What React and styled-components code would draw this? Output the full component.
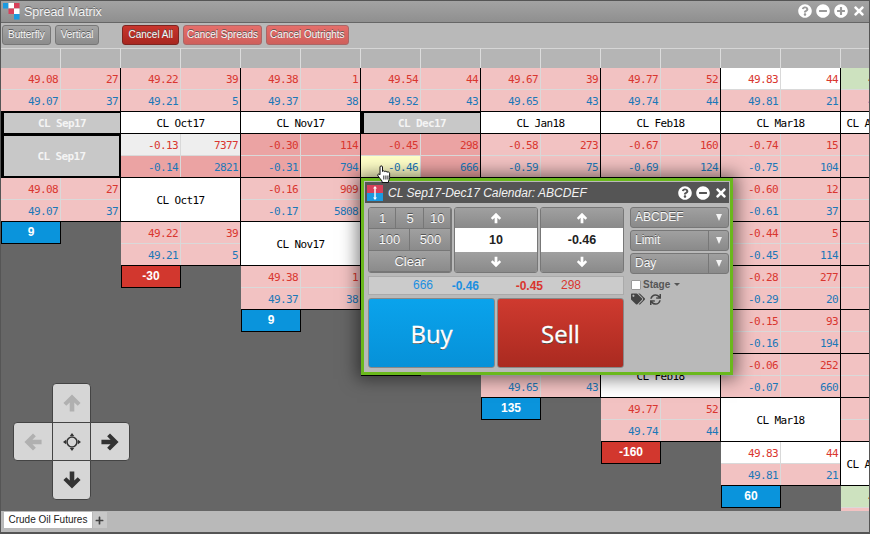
import React from "react";
import styled, { createGlobalStyle } from "styled-components";
import { FaMinusCircle, FaPlus, FaPlusCircle, FaQuestionCircle, FaSync, FaTags, FaTimes } from "react-icons/fa";

const Global = createGlobalStyle`
    html, body { margin: 0; padding: 0; background: #666; }
    body { font-family: "Liberation Sans", Arial, sans-serif; }
`;

// one entry per matrix column, top to bottom
const q = (a, b, c, d, tone, tone2, hover) => ({ t: "q", a, b, c, d, tone, tone2: tone2 || tone, hover });
const lab = (name, sel) => ({ t: "l", name, sel });
const chip = (v, side) => ({ t: "c", v, side });

const columns = [
    { top: q("49.08", 27, "49.07", 37), small: lab("CL Sep17", true), cells: [lab("CL Sep17", true), q("49.08", 27, "49.07", 37), chip(9, "buy")] },
    { top: q("49.22", 39, "49.21", 5), small: lab("CL Oct17"), cells: [q("-0.13", 7377, "-0.14", 2821, "light", "dark"), lab("CL Oct17"), q("49.22", 39, "49.21", 5), chip(-30, "sell")] },
    { top: q("49.38", 1, "49.37", 38), small: lab("CL Nov17"), cells: [q("-0.30", 114, "-0.31", 794, "dark"), q("-0.16", 909, "-0.17", 5808), lab("CL Nov17"), q("49.38", 1, "49.37", 38), chip(9, "buy")] },
    { top: q("49.54", 44, "49.52", 43), small: lab("CL Dec17", true), cells: [q("-0.45", 298, "-0.46", 666, "dark", "dark", true), q("-0.32", 40, "-0.33", 52), q("-0.16", 18, "-0.17", 75), lab("CL Dec17"), q("49.54", 44, "49.52", 43), chip(20, "buy")] },
    { top: q("49.67", 39, "49.65", 43), small: lab("CL Jan18"), cells: [q("-0.58", 273, "-0.59", 75), q("-0.45", 61, "-0.46", 33), q("-0.29", 90, "-0.30", 27), q("-0.13", 14, "-0.14", 38), lab("CL Jan18"), q("49.67", 39, "49.65", 43), chip(135, "buy")] },
    { top: q("49.77", 52, "49.74", 44), small: lab("CL Feb18"), cells: [q("-0.67", 160, "-0.69", 124), q("-0.54", 70, "-0.56", 21), q("-0.38", 44, "-0.40", 16), q("-0.22", 36, "-0.24", 58), q("-0.10", 80, "-0.12", 47), lab("CL Feb18"), q("49.77", 52, "49.74", 44), chip(-160, "sell")] },
    { top: q("49.83", 44, "49.81", 21, "white", "pink"), small: lab("CL Mar18"), cells: [q("-0.74", 15, "-0.75", 104), q("-0.60", 12, "-0.61", 37), q("-0.44", 5, "-0.45", 114), q("-0.28", 277, "-0.29", 20), q("-0.15", 93, "-0.16", 194), q("-0.06", 252, "-0.07", 660), lab("CL Mar18"), q("49.83", 44, "49.81", 21, "white", "pink"), chip(60, "buy")] },
    { narrow: true, top: q("49.87", 30, "49.85", 12, "green", "pink"), small: lab("CL Apr18"), cells: [q("-0.79", 11, "-0.80", 42), q("-0.65", 25, "-0.66", 19), q("-0.49", 8, "-0.50", 30), q("-0.33", 17, "-0.34", 22), q("-0.20", 9, "-0.21", 14), q("-0.11", 13, "-0.12", 26), q("-0.05", 10, "-0.06", 18), lab("CL Apr18"), q("49.87", 30, "49.85", 12, "green", "pink")] },
];

const tones = {
    pink: "#f2c2c2",
    dark: "#eba3a3",
    light: "#eeeeee",
    white: "#ffffff",
    green: "#cde2bf",
};

function Quote({ cell }) {
    return (
        <QuoteBlock>
            <QuoteRow $bg={tones[cell.tone || "pink"]}>
                <Num $red>{cell.a}</Num>
                <Num $red>{cell.b}</Num>
            </QuoteRow>
            <QuoteRow $bg={tones[cell.tone2 || "pink"]} $last>
                <Num $hover={cell.hover}>{cell.c}</Num>
                <Num>{cell.d}</Num>
            </QuoteRow>
        </QuoteBlock>
    );
}

function Cell({ cell, narrow }) {
    if (cell.t === "q") return <Quote cell={cell} />;
    if (cell.t === "c") return <Chip $side={cell.side}>{cell.v}</Chip>;
    return <TallLabel $sel={cell.sel} $narrow={narrow}>{cell.name}</TallLabel>;
}

function Arrow({ dir, size = 14, color = "#fff" }) {
    const rot = { up: 0, right: 90, down: 180, left: 270 }[dir];
    return (
        <svg width={size} height={size} viewBox="0 0 14 14" style={{ transform: `rotate(${rot}deg)` }}>
            <path d="M7 1 L13 7 L11 9 L8.6 6.6 V13 H5.4 V6.6 L3 9 L1 7 Z" fill={color} />
        </svg>
    );
}

function Logo() {
    return (
        <svg width="17" height="17" viewBox="0 0 17 17">
            <rect x="0" y="0" width="5.5" height="5.5" fill="#1b9ae0" />
            <rect x="5.5" y="0" width="5.5" height="5.5" fill="#fff" />
            <rect x="11" y="0" width="5.5" height="5.5" fill="#d8405a" />
            <rect x="5.5" y="5.5" width="5.5" height="5.5" fill="#d8405a" />
            <rect x="11" y="5.5" width="5.5" height="5.5" fill="#fff" />
            <rect x="11" y="11" width="5.5" height="5.5" fill="#1b9ae0" />
        </svg>
    );
}

function Dropdown({ split, children }) {
    return (
        <Select>
            <SelectText>{children}</SelectText>
            <CaretBox $split={split}><Caret /></CaretBox>
        </Select>
    );
}

function Spinner({ value }) {
    return (
        <SpinBox>
            <SpinBtn><Arrow dir="up" size={12} /></SpinBtn>
            <SpinValue>{value}</SpinValue>
            <SpinBtn><Arrow dir="down" size={12} /></SpinBtn>
        </SpinBox>
    );
}

export default function App() {
    return (
        <Win>
            <Global />
            <TitleBar>
                <Logo />
                <TitleText>Spread Matrix</TitleText>
                <TitleIcons>
                    <FaQuestionCircle size={14} />
                    <FaMinusCircle size={14} />
                    <FaPlusCircle size={14} />
                    <FaTimes size={14} />
                </TitleIcons>
            </TitleBar>
            <Toolbar>
                <Btn>Butterfly</Btn>
                <Btn>Vertical</Btn>
                <Btn $kind="danger" $gap>Cancel All</Btn>
                <Btn $kind="soft">Cancel Spreads</Btn>
                <Btn $kind="soft">Cancel Outrights</Btn>
            </Toolbar>
            <Matrix>
                {columns.map((col) => (
                    <Column key={col.small.name}>
                        <HeaderRow><HeaderCell /><HeaderCell /></HeaderRow>
                        <Quote cell={col.top} />
                        <SmallLabel $sel={col.small.sel} $narrow={col.narrow}>{col.small.name}</SmallLabel>
                        {col.cells.map((cell, i) => <Cell key={i} cell={cell} narrow={col.narrow} />)}
                    </Column>
                ))}
            </Matrix>
            <TabBar>
                <Tab>Crude Oil Futures</Tab>
                <AddTab><FaPlus size={9} /></AddTab>
            </TabBar>

            <DPad>
                <Pad $area="u" $r="4px 4px 0 0"><Arrow dir="up" size={20} color="#b0b0b0" /></Pad>
                <Pad $area="l" $r="4px 0 0 4px"><Arrow dir="left" size={20} color="#b0b0b0" /></Pad>
                <Pad $area="c">
                    <svg width="18" height="18" viewBox="0 0 18 18">
                        <circle cx="9" cy="9" r="5" fill="none" stroke="#333" strokeWidth="1.6" />
                        <path d="M9 0 L11.2 3 H6.8 Z M9 18 L6.8 15 H11.2 Z M0 9 L3 6.8 V11.2 Z M18 9 L15 11.2 V6.8 Z" fill="#333" />
                    </svg>
                </Pad>
                <Pad $area="r" $r="0 4px 4px 0"><Arrow dir="right" size={20} color="#333" /></Pad>
                <Pad $area="d" $r="0 0 4px 4px"><Arrow dir="down" size={20} color="#333" /></Pad>
            </DPad>

            <Dialog>
                <DialogTitle>
                    <svg width="16" height="16" viewBox="0 0 16 16">
                        <rect width="16" height="8" fill="#d8405a" />
                        <rect y="8" width="16" height="8" fill="#1b9ae0" />
                        <path d="M8 1 L10 3.6 H8.7 V12.4 H10 L8 15 L6 12.4 H7.3 V3.6 H6 Z" fill="#fff" />
                    </svg>
                    <DialogName>CL Sep17-Dec17 Calendar: ABCDEF</DialogName>
                    <DialogIcons>
                        <FaQuestionCircle size={14} />
                        <FaMinusCircle size={14} />
                        <FaTimes size={14} />
                    </DialogIcons>
                </DialogTitle>
                <DialogBody>
                    <Main>
                        <Controls>
                            <QtyGrid>
                                <QtyBtn $span={2}>1</QtyBtn>
                                <QtyBtn $span={2}>5</QtyBtn>
                                <QtyBtn $span={2}>10</QtyBtn>
                                <QtyBtn $span={3}>100</QtyBtn>
                                <QtyBtn $span={3}>500</QtyBtn>
                                <QtyBtn $span={6}>Clear</QtyBtn>
                            </QtyGrid>
                            <Spinner value="10" />
                            <Spinner value="-0.46" />
                        </Controls>
                        <QuoteBar>
                            <BarNum $c="#1b8fe0" $w={64}>666</BarNum>
                            <BarPrice $c="#1b8fe0" $w={46}>-0.46</BarPrice>
                            <BarPrice $c="#d9362f" $w={64}>-0.45</BarPrice>
                            <BarNum $c="#d9362f" $w={38}>298</BarNum>
                        </QuoteBar>
                        <Actions>
                            <Action $side="buy">Buy</Action>
                            <Action $side="sell">Sell</Action>
                        </Actions>
                    </Main>
                    <Side>
                        <Dropdown>ABCDEF</Dropdown>
                        <Dropdown split>Limit</Dropdown>
                        <Dropdown split>Day</Dropdown>
                        <StageRow>
                            <Check />
                            <StageText>Stage</StageText>
                            <StageCaret />
                        </StageRow>
                        <IconRow>
                            <FaTags size={14} />
                            <FaSync size={11} />
                        </IconRow>
                    </Side>
                </DialogBody>
            </Dialog>

            <Pointer>
                <svg width="14" height="18" viewBox="0 0 14 18">
                    <path d="M3 2 C3 .5 5.5 .5 5.5 2 V6.5 C5.5 5.6 7.8 5.6 7.8 6.8 C7.8 6 10 6 10 7.3 C10 6.6 12.6 6.8 12.6 8.2 V12.5 C12.6 14 12 15 11.5 16 V17.5 H5 V16 C4 14.5 2.5 13 1 11 C0 9.5 1.5 8.3 3 9.8 Z" fill="#fff" stroke="#111" strokeWidth="1" />
                    <path d="M6.8 10.5 V14.5 M8.9 10.5 V14.5 M10.9 10.5 V14.5" stroke="#111" strokeWidth=".9" />
                </svg>
            </Pointer>
        </Win>
    );
}

const Win = styled.div`
    position: relative;
    width: 870px;
    height: 534px;
    box-sizing: border-box;
    border: 1px solid #555;
    border-bottom: 2px solid #555;
    display: flex;
    flex-direction: column;
    overflow: hidden;
    background: #666;
`;

const TitleBar = styled.div`
    height: 21px;
    flex: none;
    display: flex;
    align-items: center;
    padding: 0 0 0 2px;
    background: linear-gradient(#a3a3a3, #8f8f8f);
    border-bottom: 1px solid #666;
`;

const TitleText = styled.div`
    margin-left: 4px;
    color: #f4f4f4;
    font-size: 12.5px;
    text-shadow: 0 -1px 0 #666;
`;

const TitleIcons = styled.div`
    margin-left: auto;
    display: flex;
    gap: 4px;
    padding-right: 3px;
    margin-bottom: 2px;
    color: #fff;
`;

const Toolbar = styled.div`
    height: 25px;
    flex: none;
    display: flex;
    align-items: flex-start;
    padding: 2px 0 0 1px;
    gap: 4px;
    background: #b9b9b9;
    box-sizing: border-box;
`;

const btnBg = {
    danger: "linear-gradient(#c9352d, #a8261f)",
    soft: "linear-gradient(#e56e6a, #cf5f5b)",
};

const Btn = styled.div`
    height: 18px;
    line-height: 18px;
    padding: 0 ${(p) => (p.$kind === "soft" ? "3px" : "5px")};
    margin-left: ${(p) => (p.$gap ? "19px" : "0")};
    font-size: 10px;
    color: #f8f8f8;
    text-shadow: 0 -1px 0 #555;
    border: 1px solid ${(p) => (p.$kind === "danger" ? "#7d2420" : p.$kind === "soft" ? "#a66" : "#777")};
    border-radius: 3px;
    background: ${(p) => btnBg[p.$kind] || "linear-gradient(#a4a4a4, #8c8c8c)"};
`;

const Matrix = styled.div`
    flex: 1;
    min-height: 0;
    display: flex;
    overflow: hidden;
    background: #666;
`;

const Column = styled.div`
    width: 120px;
    flex: none;
    display: flex;
    flex-direction: column;
`;

const HeaderRow = styled.div`
    height: 20px;
    flex: none;
    display: flex;
`;

const HeaderCell = styled.div`
    flex: 1;
    box-sizing: border-box;
    background: #b5b5b5;
    border-top: 1px solid #d6d6d6;
    border-right: 1px solid #dcdcdc;
`;

const QuoteBlock = styled.div`
    height: 44px;
    flex: none;
    box-sizing: border-box;
    border-right: 1px solid #000;
    border-bottom: 1px solid #000;
    display: flex;
    flex-direction: column;
`;

const QuoteRow = styled.div`
    flex: 1 1 0;
    min-height: 0;
    display: flex;
    background: ${(p) => p.$bg};
    box-sizing: border-box;
    border-bottom: ${(p) => (p.$last ? "none" : "1px solid #d9d9d9")};
`;

const Num = styled.div`
    flex: 1;
    text-align: right;
    box-sizing: border-box;
    padding-right: 2px;
    font-family: "DejaVu Sans Mono", monospace;
    font-size: 11px;
    letter-spacing: -0.6px;
    line-height: 23px;
    background: ${(p) => (p.$hover ? "#ffffc8" : "transparent")};
    color: ${(p) => (p.$red ? "#d9362f" : "#1b78b8")};
    &:first-child {
        border-right: 1px solid #d9d9d9;
    }
`;

const SmallLabel = styled.div`
    height: 22px;
    flex: none;
    box-sizing: border-box;
    text-align: center;
    font-family: "DejaVu Sans Mono", monospace;
    font-size: 11px;
    letter-spacing: -0.6px;
    line-height: 23px;
    white-space: nowrap;
    overflow: hidden;
    padding-right: ${(p) => (p.$narrow ? "60px" : "0")};
    color: ${(p) => (p.$sel ? "#f4f4f4" : "#000")};
    font-weight: ${(p) => (p.$sel ? "bold" : "normal")};
    background: ${(p) => (p.$sel ? "#c8c8c8" : "#fff")};
    border-right: 1px solid #000;
    border-bottom: 1px solid #000;
    border-left: ${(p) => (p.$sel ? "3px solid #000" : "none")};
    box-shadow: inset 0 ${(p) => (p.$sel ? "1px" : "0")} 0 #000;
`;

const TallLabel = styled(SmallLabel)`
    height: 44px;
    line-height: 46px;
    border-right: ${(p) => (p.$sel ? "2px" : "1px")} solid #000;
    border-bottom: ${(p) => (p.$sel ? "2px" : "1px")} solid #000;
    box-shadow: inset 0 ${(p) => (p.$sel ? "2px" : "0")} 0 #000;
`;

const Chip = styled.div`
    width: 60px;
    height: 23px;
    flex: none;
    margin-top: -1px;
    box-sizing: border-box;
    border: 1px solid #000;
    text-align: center;
    color: #fff;
    font-size: 12px;
    font-weight: bold;
    line-height: 21px;
    background: ${(p) => (p.$side === "sell" ? "#d2372e" : "#0a94dc")};
`;

const TabBar = styled.div`
    height: 21px;
    flex: none;
    display: flex;
    align-items: flex-start;
    background: #b9b9b9;
    padding: 1px 0 0 3px;
    gap: 1px;
    box-sizing: border-box;
`;

const Tab = styled.div`
    background: #fff;
    height: 16px;
    line-height: 16px;
    padding: 0 4.5px;
    font-size: 10px;
    color: #222;
`;

const AddTab = styled.div`
    width: 14px;
    height: 16px;
    display: flex;
    align-items: center;
    justify-content: center;
    color: #444;
    background: #c8c8c8;
`;

const DPad = styled.div`
    position: absolute;
    left: 12px;
    top: 382px;
    display: grid;
    grid-template-columns: 39px 38px 39px;
    grid-template-rows: 39px 38px 39px;
    grid-template-areas: ". u ." "l c r" ". d .";
`;

const Pad = styled.div`
    grid-area: ${(p) => p.$area};
    display: flex;
    align-items: center;
    justify-content: center;
    background: #d6d6d6;
    box-sizing: border-box;
    border: 1px solid #444;
    margin: 0 -1px -1px 0;
    border-radius: ${(p) => p.$r || "0"};
`;

const Dialog = styled.div`
    position: absolute;
    left: 360px;
    top: 177px;
    width: 372px;
    height: 197px;
    box-sizing: border-box;
    border: 3px solid #6ab81c;
    background: #b9b9b9;
    box-shadow: 0 0 16px 4px rgba(0, 0, 0, 0.5);
    display: flex;
    flex-direction: column;
`;

const DialogTitle = styled.div`
    height: 21px;
    flex: none;
    display: flex;
    align-items: center;
    padding: 0 1px 0 2px;
    margin: 1px 1px 0;
    background: #555;
`;

const DialogName = styled.div`
    margin-left: 5px;
    font-style: italic;
    font-size: 12px;
    color: #f2f2f2;
`;

const DialogIcons = styled.div`
    margin-left: auto;
    display: flex;
    gap: 4px;
    color: #fff;
`;

const DialogBody = styled.div`
    flex: 1;
    display: flex;
    padding: 4px 0 0 4px;
    gap: 6px;
`;

const Main = styled.div`
    width: 256px;
    display: flex;
    flex-direction: column;
    gap: 3px;
`;

const Controls = styled.div`
    display: flex;
    gap: 2px;
`;

const QtyGrid = styled.div`
    width: 84px;
    height: 66px;
    box-sizing: border-box;
    display: grid;
    grid-template-columns: repeat(6, 1fr);
    grid-template-rows: repeat(3, 1fr);
    border: 1px solid #777;
    border-radius: 3px;
    overflow: hidden;
`;

const QtyBtn = styled.div`
    grid-column: span ${(p) => p.$span};
    display: flex;
    align-items: center;
    justify-content: center;
    font-size: 13px;
    color: #f8f8f8;
    text-shadow: 0 -1px 0 #555;
    background: linear-gradient(#a0a0a0, #8a8a8a);
    box-shadow: inset -1px -1px 0 #777;
`;

const SpinBox = styled.div`
    width: 84px;
    height: 66px;
    box-sizing: border-box;
    display: flex;
    flex-direction: column;
    border: 1px solid #777;
    border-radius: 3px;
    overflow: hidden;
`;

const SpinBtn = styled.div`
    flex: 1;
    display: flex;
    align-items: center;
    justify-content: center;
    background: linear-gradient(#a0a0a0, #8a8a8a);
`;

const SpinValue = styled.div`
    height: 24px;
    line-height: 24px;
    text-align: center;
    background: #fff;
    font-size: 12.5px;
    font-weight: bold;
    color: #222;
`;

const QuoteBar = styled.div`
    height: 19px;
    display: flex;
    align-items: center;
    box-sizing: border-box;
    background: #cbcbcb;
    border: 1px solid #aaa;
`;

const BarNum = styled.div`
    width: ${(p) => p.$w}px;
    text-align: right;
    font-size: 12px;
    color: ${(p) => p.$c};
    margin-top: -2px;
`;

const BarPrice = styled.div`
    width: ${(p) => p.$w}px;
    text-align: right;
    font-size: 12px;
    font-weight: bold;
    color: ${(p) => p.$c};
`;

const Actions = styled.div`
    display: flex;
    gap: 2px;
`;

const Action = styled.div`
    flex: 1;
    height: 70px;
    box-sizing: border-box;
    display: flex;
    align-items: center;
    justify-content: center;
    border: 1px solid #888;
    border-radius: 3px;
    color: #fff;
    font-family: "Open Sans", sans-serif;
    font-size: 24px;
    -webkit-text-stroke: 0.3px #fff;
    text-shadow: 0 1px 0 #444;
    background: ${(p) =>
        p.$side === "buy"
            ? "linear-gradient(#0aa3ec, #0691d8)"
            : "linear-gradient(#cf3a2f, #aa2a20)"};
`;

const Side = styled.div`
    width: 99px;
    display: flex;
    flex-direction: column;
    gap: 2px;
`;

const Select = styled.div`
    height: 21px;
    flex: none;
    box-sizing: border-box;
    display: flex;
    border: 1px solid #777;
    border-radius: 3px;
    background: linear-gradient(#a0a0a0, #8a8a8a);
    color: #f8f8f8;
    font-size: 12px;
    line-height: 19px;
`;

const SelectText = styled.div`
    flex: 1;
    padding-left: 4px;
    text-shadow: 0 -1px 0 #555;
`;

const CaretBox = styled.div`
    width: 19px;
    display: flex;
    align-items: center;
    justify-content: center;
    border-left: ${(p) => (p.$split ? "1px solid #777" : "1px solid transparent")};
`;

const Caret = styled.div`
    width: 0;
    height: 0;
    border-left: 3.5px solid transparent;
    border-right: 3.5px solid transparent;
    border-top: 7px solid #f4f4f4;
`;

const StageRow = styled.div`
    display: flex;
    align-items: center;
    margin-top: 3px;
    gap: 2px;
    padding-left: 1px;
`;

const Check = styled.div`
    width: 8px;
    height: 8px;
    background: #fff;
    border: 1px solid #999;
    border-radius: 1px;
`;

const StageText = styled.div`
    font-size: 10px;
    font-weight: bold;
    color: #555;
`;

const StageCaret = styled.div`
    width: 0;
    height: 0;
    margin-left: 2px;
    border-left: 3px solid transparent;
    border-right: 3px solid transparent;
    border-top: 3px solid #555;
`;

const IconRow = styled.div`
    display: flex;
    align-items: center;
    gap: 5px;
    padding-left: 1px;
    color: #444;
`;

const Pointer = styled.div`
    position: absolute;
    left: 376px;
    top: 164px;
    line-height: 0;
`;
